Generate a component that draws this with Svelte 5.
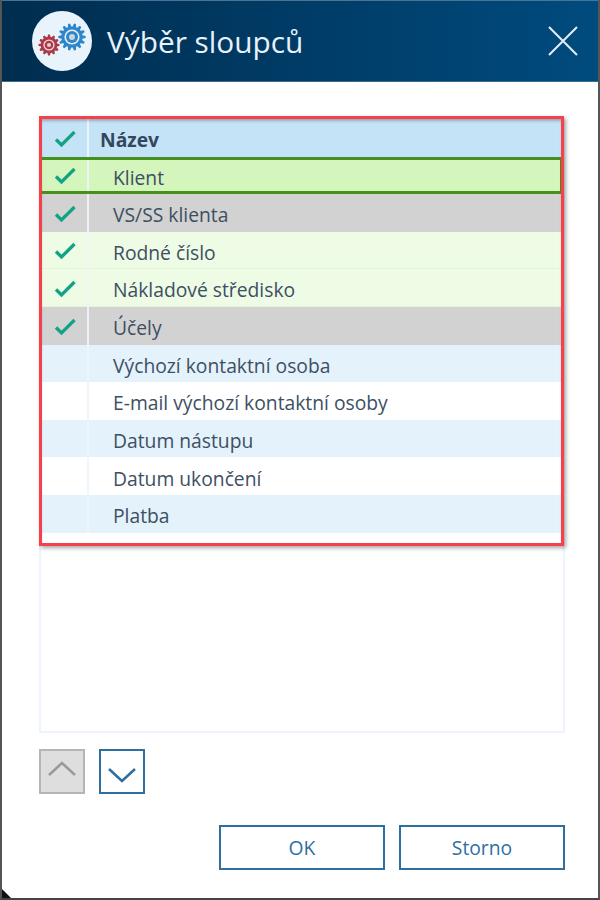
<script>
	const rows = [
		{ name: 'Klient', checked: true, kind: 'active' },
		{ name: 'VS/SS klienta', checked: true, kind: 'grey' },
		{ name: 'Rodné číslo', checked: true, kind: 'green' },
		{ name: 'Nákladové středisko', checked: true, kind: 'green' },
		{ name: 'Účely', checked: true, kind: 'grey' },
		{ name: 'Výchozí kontaktní osoba', checked: false, kind: 'blue' },
		{ name: 'E-mail výchozí kontaktní osoby', checked: false, kind: 'white' },
		{ name: 'Datum nástupu', checked: false, kind: 'blue' },
		{ name: 'Datum ukončení', checked: false, kind: 'white' },
		{ name: 'Platba', checked: false, kind: 'blue' }
	];

	// outline of a cog with n teeth, centred on cx/cy
	function gear(cx, cy, outer, inner, n) {
		let d = '';
		for (let i = 0; i < n; i++) {
			const a = (i / n) * Math.PI * 2;
			const w = (Math.PI * 2) / n;
			const pts = [
				[inner, a - w * 0.38],
				[outer, a - w * 0.16],
				[outer, a + w * 0.16],
				[inner, a + w * 0.38]
			];
			for (const [r, t] of pts) {
				d += (d ? 'L' : 'M') + (cx + r * Math.cos(t)).toFixed(2) + ' ' + (cy + r * Math.sin(t)).toFixed(2);
			}
		}
		return d + 'Z';
	}
</script>

<div class="window">
	<header class="titlebar">
		<div class="logo">
			<svg width="60" height="60" viewBox="0 0 60 60">
				<path d={gear(17, 34, 10.5, 8.2, 12)} fill="#ac3a46" />
				<circle cx="17" cy="34" r="5.6" fill="#efdcdf" />
				<circle cx="17" cy="34" r="4.3" fill="#ac3a46" />
				<circle cx="17" cy="34" r="2.1" fill="#e6cdd0" />
				<path d={gear(40, 26, 13.7, 10.6, 14)} fill="#2e86c8" />
				<circle cx="40" cy="26" r="7.6" fill="#e3f0fa" />
				<circle cx="40" cy="26" r="6" fill="#2e86c8" />
				<circle cx="40" cy="26" r="3" fill="#c9d6de" />
			</svg>
		</div>
		<h1>Výběr sloupců</h1>
		<button class="close" aria-label="Zavřít">
			<svg width="30" height="30" viewBox="0 0 30 30">
				<path d="M1 1 L29 29 M29 1 L1 29" stroke="#e6eef4" stroke-width="2" fill="none" />
			</svg>
		</button>
	</header>

	<main class="content">
		<div class="list">
			<div class="highlight"></div>
			<div class="row head">
				<div class="check">
					<svg width="24" height="18" viewBox="0 0 24 18"><path d="M3 9.5 L8.5 15 L21.5 2" stroke="#12a385" stroke-width="3.3" fill="none" /></svg>
				</div>
				<div class="name">Název</div>
			</div>
			{#each rows as row}
				<div class="row {row.kind}">
					<div class="check">
						{#if row.checked}
							<svg width="24" height="18" viewBox="0 0 24 18"><path d="M3 9.5 L8.5 15 L21.5 2" stroke="#12a385" stroke-width="3.3" fill="none" /></svg>
						{/if}
					</div>
					<div class="name">{row.name}</div>
				</div>
			{/each}
		</div>

		<div class="arrows">
			<button class="arrow disabled" aria-label="Nahoru">
				<svg width="30" height="22" viewBox="0 0 30 22"><path d="M2 14 L15 2 L28 14" stroke="#9a9a9a" stroke-width="2.5" fill="none" /></svg>
			</button>
			<button class="arrow" aria-label="Dolů">
				<svg width="30" height="22" viewBox="0 0 30 22"><path d="M2 8 L15 20 L28 8" stroke="#2f6f9f" stroke-width="2.5" fill="none" /></svg>
			</button>
		</div>

		<div class="actions">
			<button class="action">OK</button>
			<button class="action">Storno</button>
		</div>
	</main>
	<div class="corner"></div>
</div>

<style>
	:global(body) {
		margin: 0;
		background: #fff;
	}

	.window {
		position: relative;
		box-sizing: border-box;
		width: 600px;
		height: 900px;
		border-left: 2px solid #555;
		border-right: 2px solid #555;
		border-bottom: 2px solid #444;
		font-family: 'Open Sans', sans-serif;
		background: #fff;
		overflow: hidden;
	}

	.titlebar {
		box-sizing: border-box;
		height: 82px;
		display: flex;
		align-items: center;
		padding: 0 20px 0 30px;
		background: linear-gradient(90deg, #002d4f, #004b7e);
		border-top: 1px solid #4a7492;
		border-bottom: 1px solid #3d6c8e;
	}

	.logo {
		width: 60px;
		height: 60px;
		border-radius: 50%;
		background: #e9f3fb;
	}

	.logo svg {
		display: block;
	}

	h1 {
		margin: 0 0 0 15px;
		flex: 1;
		font-size: 29.8px;
		font-weight: 400;
		color: #e8f2fa;
	}

	.close {
		display: flex;
		padding: 0;
		border: 0;
		background: none;
	}

	.content {
		padding: 36px 33px 0 37px;
	}

	.list {
		position: relative;
		box-sizing: border-box;
		height: 615px;
		padding: 1px 1px 0;
		border: 2px solid #eef4fc;
		border-top: 0;
	}

	.highlight {
		position: absolute;
		left: -2px;
		top: -2px;
		right: -1px;
		height: 430px;
		box-sizing: border-box;
		border: 3px solid #f7404a;
		box-shadow: 2px 2px 4px rgba(0, 0, 0, 0.35), inset 0 3px 3px -1px rgba(0, 0, 0, 0.25);
		pointer-events: none;
		z-index: 2;
	}

	.row {
		box-sizing: border-box;
		height: 37.6px;
		display: flex;
		align-items: center;
		color: #3d4f63;
		font-size: 19.3px;
	}

	.check {
		box-sizing: border-box;
		width: 47px;
		height: 100%;
		flex: none;
		display: flex;
		align-items: center;
		justify-content: center;
		padding-top: 2px;
		border-right: 2px solid rgba(238, 244, 252, 0.9);
	}

	.name {
		padding: 4px 0 0 24px;
	}

	.head {
		background: #c5e3f6;
		font-weight: 700;
		color: #33475f;
	}

	.head .name {
		padding-left: 11px;
	}

	.active {
		background: #d4f5bb;
		border: solid #46901f;
		border-width: 3px 2px 3px 0;
	}

	.grey {
		background: #d2d2d2;
	}

	.green {
		background: #eefbe5;
		border-bottom: 1px solid #e4f5d8;
	}

	.blue {
		background: #e4f2fb;
	}

	.white {
		background: #fff;
	}

	.arrows {
		display: flex;
		gap: 14px;
		margin-top: 16px;
	}

	.arrow {
		box-sizing: border-box;
		width: 46px;
		height: 45px;
		display: flex;
		align-items: center;
		justify-content: center;
		padding: 0;
		background: #fff;
		border: 2px solid #2f6f9f;
		border-radius: 0;
	}

	.arrow.disabled {
		background: #dedede;
		border-color: #b5b5b5;
	}

	.actions {
		display: flex;
		justify-content: flex-end;
		gap: 14px;
		margin-top: 31px;
	}

	.action {
		box-sizing: border-box;
		width: 166px;
		height: 45px;
		padding: 0;
		background: #fff;
		border: 2px solid #2f6f9f;
		border-radius: 0;
		color: #2f6f9f;
		font-family: inherit;
		font-size: 19.3px;
	}

	.corner {
		position: absolute;
		left: 0;
		bottom: 0;
		width: 0;
		height: 0;
		border-style: solid;
		border-width: 9px 0 0 9px;
		border-color: transparent transparent transparent #111;
	}
</style>
